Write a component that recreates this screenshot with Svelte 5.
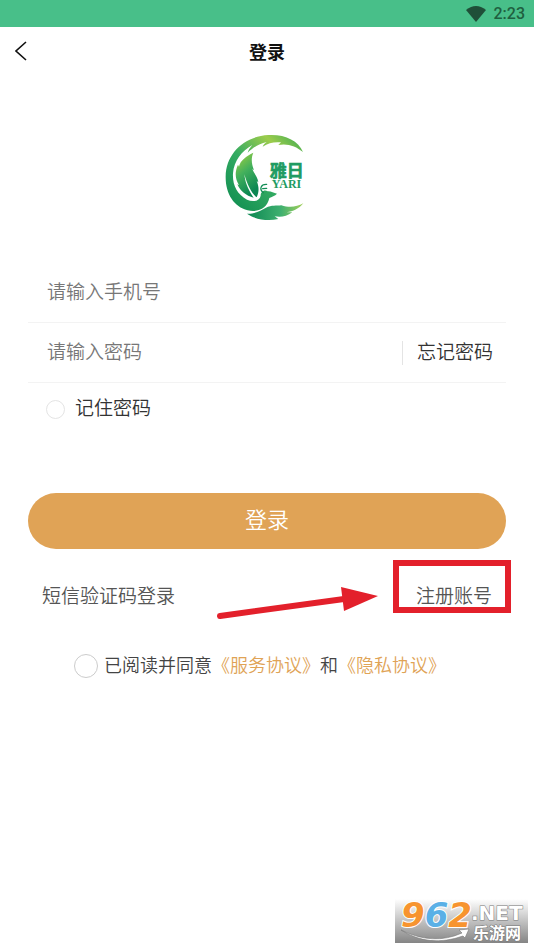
<script lang="ts">
  let phone = $state('')
  let password = $state('')
  let remember = $state(false)
  let agreed = $state(false)
</script>

<div class="page">
  <div class="status">
    <svg width="20" height="16" viewBox="0 0 20 16" aria-hidden="true">
      <path d="M0 4 Q10 -4 20 4 L10 16 Z" fill="#1f4f38" />
    </svg>
    <span>2:23</span>
  </div>

  <header>
    <button class="back" type="button" aria-label="返回">
      <svg width="12" height="20" viewBox="0 0 12 20">
        <path d="M11 1 L1 10 L11 19" fill="none" stroke="#111" stroke-width="1.6" />
      </svg>
    </button>
    <h1>登录</h1>
  </header>

  <main>
    <svg class="logo" width="100" height="100" viewBox="6 0 300 300" role="img" aria-label="雅日 YARI">
      <defs>
        <linearGradient id="ring" x1="0" y1="1" x2="1" y2="0">
          <stop offset="0" stop-color="#0c8a4f" />
          <stop offset="0.45" stop-color="#34ab62" />
          <stop offset="0.75" stop-color="#9ccc4c" />
          <stop offset="1" stop-color="#35a853" />
        </linearGradient>
        <linearGradient id="leaf" x1="0" y1="0" x2="0.4" y2="1">
          <stop offset="0" stop-color="#a9d23c" />
          <stop offset="0.5" stop-color="#43b05c" />
          <stop offset="1" stop-color="#0b8752" />
        </linearGradient>
        <linearGradient id="tail" x1="0" y1="0" x2="1" y2="0">
          <stop offset="0" stop-color="#0b8752" />
          <stop offset="0.6" stop-color="#3fb070" />
          <stop offset="1" stop-color="#a5d05a" />
        </linearGradient>
      </defs>
      <path
        fill="url(#ring)"
        d="M264 78 C250 42 207 24 160 27 C88 31 33 82 32 151 C31 203 57 243 98 253 C132 260 157 245 163 216 C170 212 180 210 186 203 C176 202 168 195 158 196 C149 189 137 196 137 209 C134 226 113 229 96 221 C65 204 52 176 54 142 C57 104 80 75 112 57 C104 66 100 73 98 80 C114 64 132 54 155 48 C148 53 145 57 143 62 C160 50 179 47 198 49 L190 57 C216 51 243 60 264 78 Z"
      />
      <path
        fill="url(#leaf)"
        d="M115 80 C94 90 76 103 72 122 L69 116 C58 139 61 160 72 177 L67 175 C76 196 93 209 116 215 C103 197 91 174 88 145 C97 178 110 202 125 214 C133 197 132 181 125 165 L130 169 C128 151 117 143 112 129 L117 133 C109 112 108 96 115 80 Z"
      />
      <path
        d="M145 200 C132 190 137 174 155 175 M143 188 L155 187"
        fill="none"
        stroke="#128e55"
        stroke-width="4"
        stroke-linecap="round"
      />
      <path
        fill="url(#tail)"
        d="M96 263 C119 264 137 254 153 245 C170 237 184 240 199 238 C224 246 245 243 265 232 C251 249 235 256 215 259 L232 259 C215 272 197 274 179 271 L190 279 C159 286 121 281 96 263 Z"
      />
      <text class="logo-cn" x="164" y="154">雅日</text>
      <text class="logo-en" x="170" y="186">YARI</text>
    </svg>

    <form onsubmit={(e) => e.preventDefault()}>
      <div class="field">
        <input type="tel" aria-label="手机号" placeholder="请输入手机号" bind:value={phone} />
      </div>
      <div class="field">
        <input type="password" aria-label="密码" placeholder="请输入密码" bind:value={password} />
        <a class="forgot" href="#forgot">忘记密码</a>
      </div>
      <label class="remember">
        <input type="checkbox" bind:checked={remember} />
        <span>记住密码</span>
      </label>
      <button class="submit" type="submit">登录</button>
    </form>

    <div class="links">
      <a href="#sms">短信验证码登录</a>
      <a class="register" href="#register">注册账号</a>
      <svg class="pointer" width="162" height="36" viewBox="0 0 162 36" aria-hidden="true">
        <path d="M4 30 L128 13" stroke="#e3202b" stroke-width="6" stroke-linecap="round" />
        <path d="M125 1 L162 10 L128 25 Z" fill="#e3202b" />
      </svg>
    </div>

    <div class="agree">
      <input id="agree" type="checkbox" bind:checked={agreed} />
      <div>
        <label for="agree">已阅读并同意</label><a href="#terms">《服务协议》</a>和<a href="#privacy">《隐私协议》</a>
      </div>
    </div>
  </main>

  <svg class="watermark" width="133" height="54" viewBox="0 -10 133 54" role="img" aria-label="962.NET 乐游网">
    <defs>
      <linearGradient id="shade" x1="0" y1="0" x2="0" y2="1">
        <stop offset="0" stop-color="#fff" />
        <stop offset="1" stop-color="#858585" />
      </linearGradient>
    </defs>
    <rect width="133" height="44" fill="url(#shade)" />
    <path d="M6 31 Q38 47 67 34 L64 31 L74 30 L70 39 L68 37 Q34 49 6 31 Z" fill="#fff" stroke="#777" stroke-width="0.6" />
    <text class="digits" x="6" y="28">
      <tspan fill="#f7942f">9</tspan><tspan fill="#5ab0e6">6</tspan><tspan fill="#f7942f">2</tspan>
    </text>
    <text class="net" x="76" y="21">.NET</text>
    <text class="site" x="78" y="40">乐游网</text>
  </svg>
</div>

<style>
  :global(body) {
    background: #fff;
  }

  .page {
    position: relative;
    min-height: 100vh;
    color: #333;
    font-family: Roboto, 'Noto Sans CJK SC', sans-serif;
    font-size: 19px;
    font-weight: 350;
    line-height: 28px;
  }

  .status {
    display: flex;
    align-items: center;
    justify-content: flex-end;
    gap: 8px;
    height: 27px;
    padding-right: 9px;
    background: #48bf89;
    color: #1f5f40;
    font-size: 16px;
    font-weight: 500;
  }

  header {
    display: grid;
    grid-template-columns: 44px 1fr 44px;
    align-items: center;
    height: 51px;
  }

  .back {
    display: flex;
    padding: 0 0 4px 15px;
    border: 0;
    background: none;
  }

  h1 {
    margin: 0;
    color: #111;
    font-size: 18px;
    font-weight: 700;
    text-align: center;
  }

  main {
    padding: 48px 28px 0;
  }

  .logo {
    display: block;
    margin: 0 auto 37px;
  }

  .logo-cn,
  .logo-en {
    fill: #209b62;
  }

  .logo-cn {
    font-size: 51px;
    font-weight: 700;
    stroke: #209b62;
    stroke-width: 2px;
  }

  .logo-en {
    font-family: 'Liberation Serif', serif;
    font-size: 36px;
    font-weight: 700;
  }

  .field {
    display: flex;
    align-items: center;
    height: 60px;
    box-sizing: border-box;
    border-bottom: 1px solid #f3f3f3;
  }

  .field input {
    flex: 1;
    min-width: 0;
    padding: 0 19px;
    border: 0;
    outline: 0;
    background: none;
    color: #333;
    font: inherit;
  }

  .field input::placeholder {
    color: #777;
  }

  a {
    color: inherit;
    text-decoration: none;
  }

  .forgot {
    padding: 0 13px 0 14px;
    border-left: 1px solid #e4e4e4;
    line-height: 24px;
  }

  input[type='checkbox'] {
    flex: none;
    width: 19px;
    height: 19px;
    margin: 0;
    appearance: none;
    border: 1px solid #e4e4e4;
    border-radius: 50%;
  }

  input[type='checkbox']:checked {
    background: #e0a356;
  }

  .remember {
    display: flex;
    align-items: center;
    gap: 10px;
    width: max-content;
    padding: 12px 18px;
  }

  .submit {
    width: 100%;
    height: 56px;
    margin-top: 58px;
    border: 0;
    border-radius: 28px;
    background: #e0a356;
    color: #fff;
    font: inherit;
    font-size: 22px;
  }

  .links {
    position: relative;
    display: flex;
    justify-content: space-between;
    margin-top: 34px;
    padding: 0 14px;
    color: #555;
  }

  .register {
    position: relative;
  }

  /* highlight drawn over the register link */
  .register::after {
    position: absolute;
    inset: -23px -19px -2px -23px;
    border: 6px solid #e3202b;
    content: '';
  }

  .pointer {
    position: absolute;
    top: 3px;
    right: 128px;
  }

  .agree {
    display: flex;
    align-items: center;
    justify-content: center;
    gap: 6px;
    margin-top: 41px;
    padding-right: 14px;
    color: #444;
    font-size: 18px;
    white-space: nowrap;
  }

  .agree input[type='checkbox'] {
    width: 24px;
    height: 24px;
    border-color: #ccc;
  }

  .agree a {
    color: #e0a356;
  }

  .watermark {
    position: absolute;
    right: 6px;
    bottom: 6px;
  }

  .digits,
  .net {
    font-family: 'DejaVu Sans', sans-serif;
  }

  .digits {
    font-size: 34px;
    font-style: italic;
    font-weight: 700;
    stroke: #fff;
    stroke-width: 2px;
    paint-order: stroke;
  }

  .net,
  .site {
    fill: #fff;
    stroke: #777;
    stroke-width: 1px;
    paint-order: stroke;
    font-weight: 700;
  }

  .net {
    font-size: 20px;
  }

  .site {
    font-size: 16px;
  }
</style>
